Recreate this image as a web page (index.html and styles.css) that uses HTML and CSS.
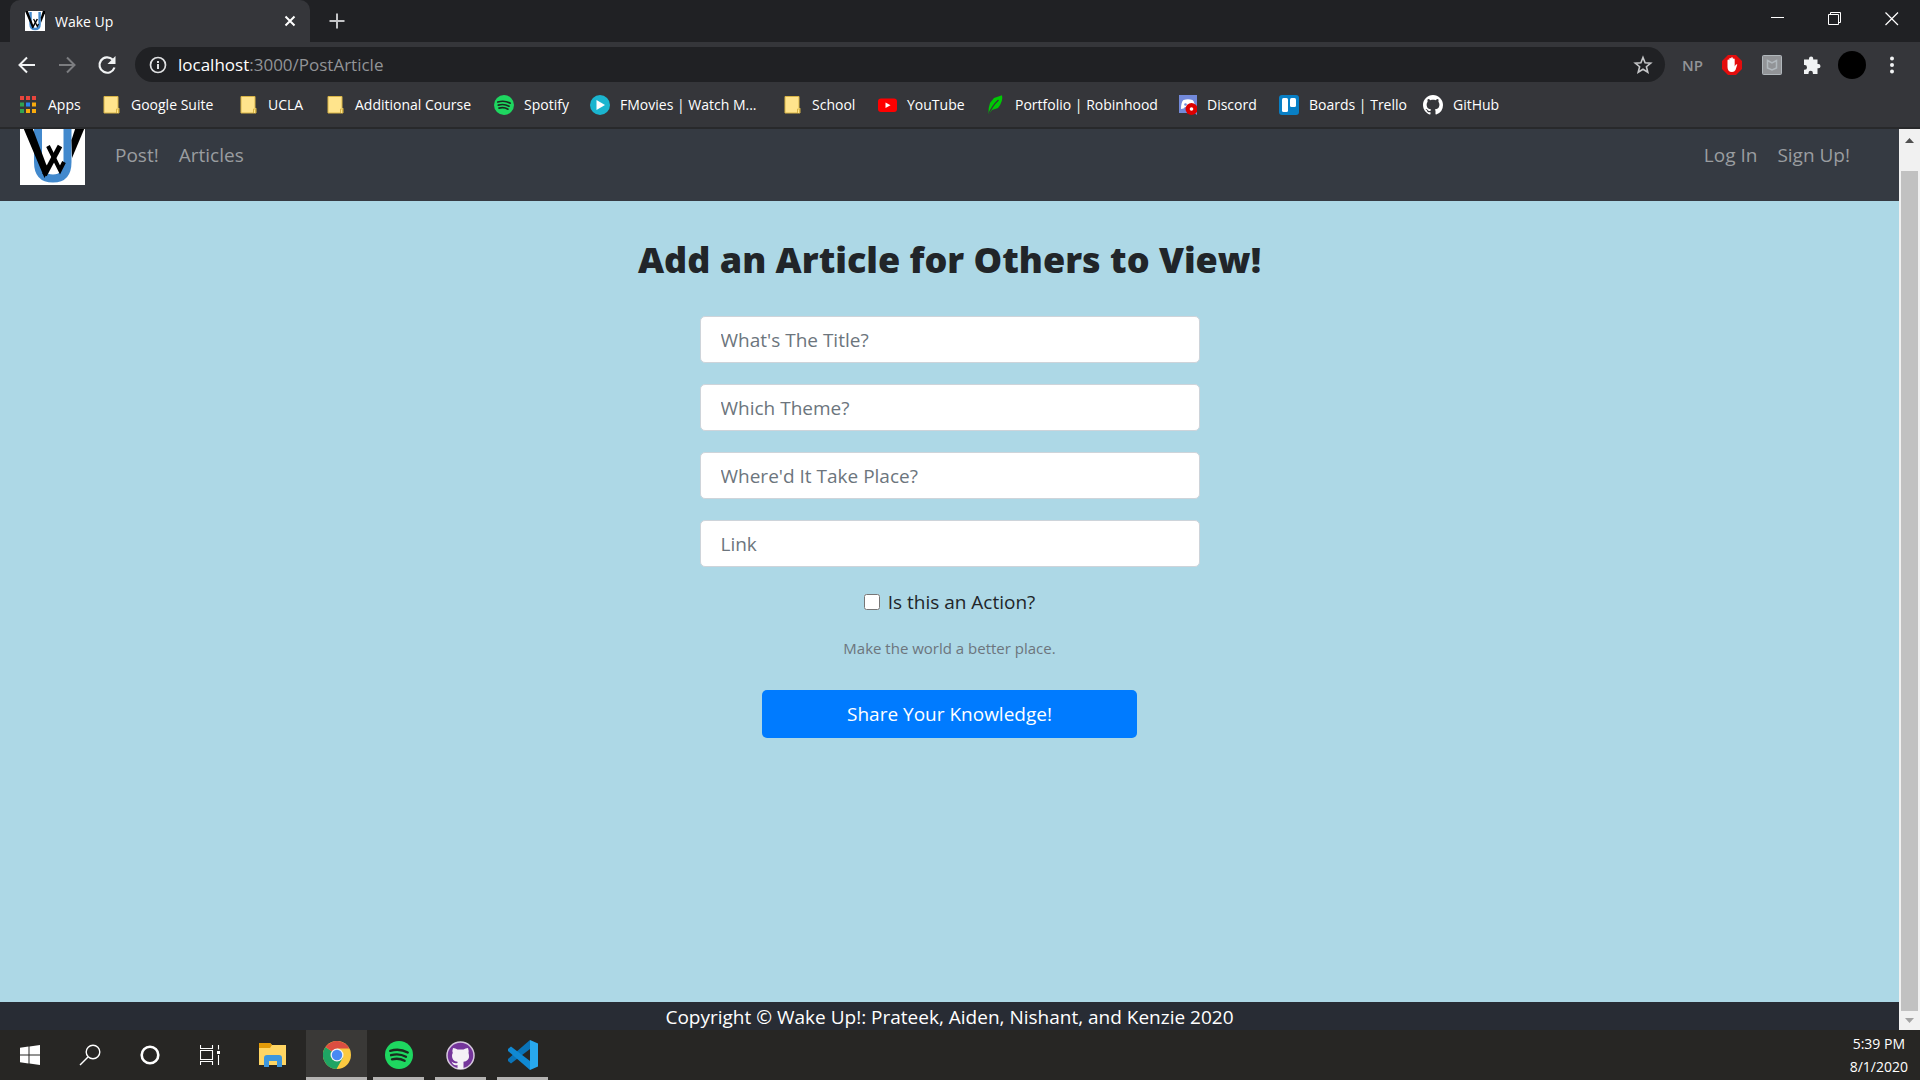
FILE: index.html
```html
<!DOCTYPE html>
<html lang="en">
<head>
<meta charset="utf-8">
<title>Wake Up</title>
<link rel="stylesheet" href="styles.css">
</head>
<body>
<svg class="defs" aria-hidden="true">
  <symbol id="logo" viewBox="0 0 65 65">
    <rect width="65" height="65" fill="#fff"/>
    <path d="M18 3V42Q18 58.500 33 58.500Q47.500 58.500 47.500 42V3" fill="none" stroke="#4289cd" stroke-width="8"/>
    <path d="M0 0H9.500L26 44L29 49L24.500 58Z" fill="#000"/>
    <path d="M58 0H65V7L52 38L51.500 20Z" fill="#000"/>
    <path d="M24.500 55L40 26" fill="none" stroke="#000" stroke-width="5"/>
    <path d="M28 26L40 50L44 42" fill="none" stroke="#000" stroke-width="4"/>
  </symbol>
  <symbol id="folder" viewBox="0 0 20 20">
    <path d="M3 1.500h14v11l1 1v4.500H3z" fill="#ffe48c" stroke="#d8b446"/>
    <path d="M15.500 18v-4h2v4" fill="#ffe48c" stroke="#d8b446"/>
  </symbol>
  <symbol id="spotify" viewBox="0 0 24 24">
    <circle cx="12" cy="12" r="12" fill="#1ed760"/>
    <path d="M4.500 8.400Q12.500 6 19.500 9.800M5.200 12.200Q12 10.200 18 13.500M6 15.700Q12 14.200 16.800 17" fill="none" stroke="#1b2b20" stroke-width="2" stroke-linecap="round"/>
  </symbol>
  <symbol id="octocat" viewBox="0 0 16 16">
    <path d="M8 0C3.580 0 0 3.580 0 8c0 3.540 2.290 6.530 5.470 7.590.4.070.55-.17.55-.38 0-.19-.01-.82-.01-1.490-2.010.37-2.530-.49-2.690-.94-.09-.23-.48-.94-.82-1.130-.28-.15-.68-.52-.01-.53.63-.01 1.080.58 1.230.82.72 1.210 1.870.87 2.330.66.07-.52.28-.87.51-1.070-1.780-.2-3.640-.89-3.640-3.950 0-.87.31-1.590.82-2.150-.08-.2-.36-1.020.08-2.120 0 0 .67-.21 2.200.82.64-.18 1.320-.27 2-.27s1.360.09 2 .27c1.530-1.040 2.200-.82 2.200-.82.44 1.100.16 1.920.08 2.120.51.56.82 1.270.82 2.150 0 3.070-1.870 3.750-3.650 3.950.29.25.54.73.54 1.480 0 1.070-.01 1.930-.01 2.200 0 .21.15.46.55.38A8.010 8.010 0 0 0 16 8c0-4.420-3.580-8-8-8z"/>
  </symbol>
</svg>

<div class="screen">
  <header class="browser">
    <div class="tabstrip">
      <div class="tab">
        <svg class="icon"><use href="#logo"/></svg>
        <span class="tab-title">Wake Up</span>
        <button class="plain" aria-label="Close tab"><svg width="12" height="12" viewBox="0 0 12 12"><path d="M1.500 1.500l9 9M10.500 1.500l-9 9" stroke="#fff" stroke-width="2"/></svg></button>
      </div>
      <button class="plain new-tab" aria-label="New tab"><svg width="16" height="16" viewBox="0 0 16 16"><path d="M8 .5v15M.5 8h15" stroke="#c4c5c7" stroke-width="2"/></svg></button>
      <div class="window-buttons">
        <button class="plain" aria-label="Minimize"><svg width="14" height="14" viewBox="0 0 14 14"><path d="M0 5.500h13" stroke="#fff"/></svg></button>
        <button class="plain" aria-label="Restore"><svg width="14" height="14" viewBox="0 0 14 14"><path d="M.5 2.500h10v10H.5zM2.500 2.500v-2h10v10h-2" fill="none" stroke="#fff"/></svg></button>
        <button class="plain" aria-label="Close"><svg width="14" height="14" viewBox="0 0 14 14"><path d="M.5 .5l12.500 12.500M13 .5L.5 13" stroke="#fff" stroke-width="1.200"/></svg></button>
      </div>
    </div>
    <div class="toolbar">
      <button class="plain nav-button" aria-label="Back"><svg width="20" height="20" viewBox="0 0 20 20"><path d="M18 10H3M10 2.500L2.500 10l7.500 7.500" fill="none" stroke="#f1f3f4" stroke-width="2"/></svg></button>
      <button class="plain nav-button" aria-label="Forward"><svg width="20" height="20" viewBox="0 0 20 20"><path d="M2 10h15M10 2.500l7.500 7.500-7.500 7.500" fill="none" stroke="#7c7d80" stroke-width="2"/></svg></button>
      <button class="plain nav-button" aria-label="Reload"><svg width="20" height="20" viewBox="0 0 20 20"><path d="M17.500 12.500A7.700 7.700 0 1 1 15.600 4.500" fill="none" stroke="#f1f3f4" stroke-width="2.200"/><path d="M18.500 1v8h-8z" fill="#f1f3f4"/></svg></button>
      <div class="address">
        <svg width="18" height="18" viewBox="0 0 18 18"><circle cx="9" cy="9" r="7.500" fill="none" stroke="#dfe0e2" stroke-width="1.700"/><path d="M9 8v5M9 5v2" stroke="#dfe0e2" stroke-width="2"/></svg>
        <div class="url"><span class="host">localhost</span>:3000/PostArticle</div>
        <svg width="20" height="20" viewBox="0 0 20 20"><path d="M10 2.500l2.100 5.200 5.600.4-4.300 3.600 1.400 5.500-4.800-3-4.800 3 1.400-5.500L2.300 8.100l5.600-.4z" fill="none" stroke="#c5c6c8" stroke-width="1.600"/></svg>
      </div>
      <div class="extensions">
        <span class="np">NP</span>
        <svg class="icon" viewBox="0 0 20 20"><path d="M6 0h8l6 6v8l-6 6H6l-6-6V6z" fill="#e40d0d"/><path d="M5.500 12V5.500a.9.900 0 0 1 1.800 0V9V3.800a.9.900 0 0 1 1.800 0V9V3.200a.9.900 0 0 1 1.800 0V9V4.500a.9.900 0 0 1 1.800 0v7l1-1.700q1-1 1.600-.2L13.500 15q-1 2-3.500 2q-4.500 0-4.500-5z" fill="#fff"/></svg>
        <svg class="icon" viewBox="0 0 20 20"><rect x=".5" y=".5" width="19" height="19" rx="1" fill="#929497" stroke="#b0b7bb"/><path d="M5.500 5.500L10 8l4.500-2.500V13L10 15l-4.500-2z" fill="none" stroke="#b1b8bd" stroke-width="1.500"/></svg>
        <svg class="icon" viewBox="0 0 20 20"><path d="M2 4.500h5V3.600a2.100 2.100 0 0 1 4.200 0v.9h4.300v4.600h.9a2.100 2.100 0 0 1 0 4.200h-.9V19h-4.600v-1a2.200 2.200 0 0 0-4.400 0v1H2v-4.300h.7a2.300 2.300 0 0 0 0-4.600H2z" fill="#f1f3f4"/></svg>
        <span class="avatar"></span>
        <svg class="icon" viewBox="0 0 20 20"><g fill="#f1f3f4"><circle cx="10" cy="3.500" r="2"/><circle cx="10" cy="10" r="2"/><circle cx="10" cy="16.500" r="2"/></g></svg>
      </div>
    </div>
    <nav class="bookmarks">
      <a href="#"><svg class="icon" viewBox="0 0 20 20"><path d="M2 1h4v4H2zM8 1h4v4H8zM14 1h4v4h-4z" fill="#e8453c"/><path d="M2 7.500h4v4H2zM2 14h4v4H2z" fill="#32a350"/><path d="M8 7.500h4v4H8z" fill="#2a82f0"/><path d="M14 7.500h4v4h-4zM8 14h4v4H8zM14 14h4v4h-4z" fill="#f9ab0c"/></svg>Apps</a>
      <a href="#"><svg class="icon"><use href="#folder"/></svg>Google Suite</a>
      <a href="#"><svg class="icon"><use href="#folder"/></svg>UCLA</a>
      <a href="#"><svg class="icon"><use href="#folder"/></svg>Additional Course</a>
      <a href="#"><svg class="icon"><use href="#spotify"/></svg>Spotify</a>
      <a href="#"><svg class="icon" viewBox="0 0 20 20"><circle cx="10" cy="10" r="10" fill="#1bb5cf"/><path d="M6.500 5l8.500 5-8.500 5z" fill="#fff"/></svg>FMovies | Watch M...</a>
      <a href="#"><svg class="icon"><use href="#folder"/></svg>School</a>
      <a href="#"><svg class="icon" viewBox="0 0 20 20"><rect x="1" y="3.500" width="19" height="13.500" rx="3" fill="#f00"/><path d="M8.500 7.500l5 2.700-5 2.800z" fill="#fff"/></svg>YouTube</a>
      <a href="#"><svg class="icon" viewBox="0 0 20 20"><path d="M3.500 19.500Q3 13 5 8L9 3L17 .3Q18.500 6 13 13L7 15z" fill="#00c805"/><path d="M3.500 19.500Q7 11 13.500 5" fill="none" stroke="#35363a" stroke-width="1.200"/></svg>Portfolio | Robinhood</a>
      <a href="#"><svg class="icon" viewBox="0 0 20 20"><path d="M2 0h18v20l-3-2H2z" fill="#7289da"/><path d="M4 14Q4 7 6.500 5Q11 3.500 15.500 5Q18 7 18 14Q15 14 14 12H8Q7 14 4 14z" fill="#fff"/><circle cx="8.500" cy="9.500" r="1.300" fill="#7289da"/><circle cx="14.500" cy="14" r="6" fill="#dc0000"/><circle cx="14.500" cy="14" r="1.800" fill="#fff"/></svg>Discord</a>
      <a href="#"><svg class="icon" viewBox="0 0 20 20"><rect width="20" height="20" rx="3" fill="#087fc5"/><rect x="3" y="3" width="6" height="14" rx="1.500" fill="#fff"/><rect x="11" y="3" width="6" height="9" rx="1.500" fill="#fff"/></svg>Boards | Trello</a>
      <a href="#"><svg class="icon white"><use href="#octocat"/></svg>GitHub</a>
    </nav>
  </header>

  <div class="viewport">
    <div class="site">
      <nav class="navbar">
        <a href="#" aria-label="Wake Up home"><svg class="brand" viewBox="0 9 65 56"><use href="#logo" width="65" height="65"/></svg></a>
        <a href="#">Post!</a>
        <a href="#">Articles</a>
        <a class="push" href="#">Log In</a>
        <a href="#">Sign Up!</a>
      </nav>
      <main>
        <h1>Add an Article for Others to View!</h1>
        <form>
          <input class="field" type="text" aria-label="Title" placeholder="What's The Title?">
          <input class="field" type="text" aria-label="Theme" placeholder="Which Theme?">
          <input class="field" type="text" aria-label="Place" placeholder="Where'd It Take Place?">
          <input class="field" type="text" aria-label="Link" placeholder="Link">
          <div class="check"><input type="checkbox" id="action"><label for="action">Is this an Action?</label></div>
          <p class="hint">Make the world a better place.</p>
          <button class="submit" type="button">Share Your Knowledge!</button>
        </form>
      </main>
      <footer>Copyright © Wake Up!: Prateek, Aiden, Nishant, and Kenzie 2020</footer>
    </div>
    <div class="scrollbar">
      <svg width="21" height="42" viewBox="0 0 21 42"><path d="M6 14l4.500-5 4.500 5z" fill="#505050"/></svg>
      <div class="thumb"></div>
      <svg width="21" height="19" viewBox="0 0 21 19"><path d="M6 7l4.500 5L15 7z" fill="#a3a3a3"/></svg>
    </div>
  </div>

  <div class="taskbar">
    <button class="plain" aria-label="Start"><svg width="20" height="20" viewBox="0 0 20 20"><path d="M0 2.800L8.500 1.600V9.500H0zM9.500 1.500L20 0v9.500H9.500zM0 10.500h8.500v8L0 17.300zM9.500 10.500H20V20L9.500 18.600z" fill="#fff"/></svg></button>
    <button class="plain" aria-label="Search"><svg width="22" height="22" viewBox="0 0 22 22"><circle cx="14" cy="8" r="6.800" fill="none" stroke="#fff" stroke-width="1.400"/><path d="M9 13L1 21" stroke="#fff" stroke-width="1.500"/></svg></button>
    <button class="plain" aria-label="Cortana"><svg width="20" height="20" viewBox="0 0 20 20"><circle cx="10" cy="10" r="8.300" fill="none" stroke="#fff" stroke-width="2.600"/></svg></button>
    <button class="plain" aria-label="Task view"><svg width="20" height="20" viewBox="0 0 20 20"><path d="M.5 0v3.500h12V0M.5 5.500h12v9H.5zM.5 20v-3.500h12V20M18.500 0v4.500M18.500 10v10" fill="none" stroke="#fff" stroke-width="1.100"/><path d="M17 6h3v3h-3z" fill="#fff"/></svg></button>
    <button class="plain wide" aria-label="File Explorer"><svg width="28" height="24" viewBox="0 0 28 24"><path d="M0 0h11l2 2h14v20H0z" fill="#ffd563"/><path d="M0 0h11l2 2-2 3H0z" fill="#e19a08"/><path d="M5 24V15q0-3 3-3h12q3 0 3 3v9h-5v-6h-8v6z" fill="#3d96dd"/></svg></button>
    <button class="plain app active" aria-label="Chrome"><svg width="28" height="28" viewBox="0 0 28 28"><circle cx="14" cy="14" r="14" fill="#fbc940"/><path d="M14 14L2.500 6A14 14 0 0 0 13.500 28L20 16.500z" fill="#1fa463"/><path d="M14 14L2.500 6A14 14 0 0 1 26.300 7.500H14z" fill="#dc4e41"/><circle cx="14" cy="14" r="6.500" fill="#f3f3f3"/><circle cx="14" cy="14" r="5.200" fill="#4889f4"/></svg></button>
    <button class="plain app" aria-label="Spotify"><svg width="28" height="28"><use href="#spotify"/></svg></button>
    <button class="plain app" aria-label="GitHub Desktop"><svg width="29" height="29" viewBox="0 0 29 29"><circle cx="14.500" cy="14.500" r="13.500" fill="#75359b" stroke="#d7c9df" stroke-width="1.500"/><path d="M7 7q2.500 0 4.500 1.500h6Q19.500 7 22 7q1 3 .5 5q1.500 5-1 7q-1.500 1.500-4 1.800V28h-6v-4Q7 25 5.500 20.500q2.500 2.500 6 1.500v-1.200Q6 20 6 15q0-2 .8-3Q6 9.500 7 7z" fill="#f4f0f6"/></svg></button>
    <button class="plain app" aria-label="Visual Studio Code"><svg width="30" height="30" viewBox="0 0 30 30"><path d="M22 0v9L3 23.500 0 21V19z" fill="#0a74b9"/><path d="M22 30v-9L3 6.500 0 9v2z" fill="#1089d3"/><path d="M22 0L30 3.500V26.500L22 30z" fill="#28a8ee"/></svg></button>
    <div class="clock"><div>5:39 PM</div><div>8/1/2020</div></div>
  </div>
</div>
</body>
</html>
```
FILE: styles.css
```css
* { box-sizing: border-box; }
body { margin: 0; font-family: "Open Sans", "Noto Sans", sans-serif; }
a { color: inherit; text-decoration: none; }
svg { display: block; flex: none; }
button, input { font: inherit; }
.defs { position: absolute; width: 0; height: 0; }
.plain { display: flex; align-items: center; justify-content: center; padding: 0; border: 0; background: none; }
.icon { width: 20px; height: 20px; }
.white { fill: #fff; }

.screen { display: flex; flex-direction: column; height: 100vh; }

/* Browser chrome */
.browser { background: #35363a; border-bottom: 2px solid #28292b; color: #fff; font-size: 14px; }
.tabstrip { display: flex; height: 42px; padding-left: 10px; background: #202124; }
.tab { display: flex; align-items: center; gap: 10px; width: 300px; padding: 0 14px 0 15px; border-radius: 10px 10px 0 0; background: #35363a; }
.tab-title { flex: 1; }
.new-tab { width: 54px; }
.window-buttons { display: flex; margin-left: auto; padding-bottom: 5px; }
.window-buttons button { width: 57px; }
.toolbar { display: flex; align-items: center; height: 45px; padding: 0 18px 0 7px; }
.nav-button { width: 40px; height: 40px; }
.address { display: flex; flex: 1; align-items: center; gap: 11px; height: 35px; margin-left: 8px; padding: 0 12px 0 14px; border-radius: 18px; background: #202124; color: #929497; font-size: 17px; }
.url { flex: 1; }
.host { color: #fff; }
.extensions { display: flex; align-items: center; gap: 20px; margin-left: 17px; }
.np { width: 20px; color: #929497; font-size: 15px; font-weight: 600; }
.avatar { width: 28px; height: 28px; margin: 0 -4px; border-radius: 50%; background: #000; }
.bookmarks { display: grid; grid-template-columns: 83px 137px 87px 169px 96px 192px 95px 108px 192px 102px 144px auto; height: 40px; padding-left: 18px; }
.bookmarks a { display: flex; align-items: center; gap: 10px; height: 35px; white-space: nowrap; }

/* Page */
.viewport { display: flex; flex: 1; min-height: 0; }
.site { display: flex; flex: 1; flex-direction: column; background: #add8e6; color: #212529; font-size: 19px; }
.navbar { display: flex; align-items: flex-start; gap: 20px; height: 72px; padding: 0 49px 0 20px; background: #353a42; color: #9a9da0; line-height: 52px; }
.brand { width: 65px; height: 56px; margin-right: 10px; }
.push { margin-left: auto; }
main { flex: 1; padding-top: 33px; text-align: center; }
h1 { margin: 0 0 30px; font-size: 36px; font-weight: 800; line-height: 52px; }
form { display: flex; flex-direction: column; align-items: center; }
.field { width: 500px; max-width: 100%; height: 47px; margin-bottom: 21px; padding: 0 20px; border: 1px solid #ced4da; border-radius: 5px; background: #fff; }
.field::placeholder { color: #6c757d; opacity: 1; }
.check { display: flex; align-items: center; gap: 8px; line-height: 28px; }
.check input { width: 16px; height: 16px; margin: 0; }
.hint { margin: 20px 0 30px; color: #6c757d; font-size: 15px; line-height: 24px; }
.submit { width: 375px; height: 48px; padding: 0; border: 0; border-radius: 5px; background: #007bff; color: #fff; }
footer { height: 28px; background: #282c34; color: #fff; line-height: 30px; text-align: center; }
.scrollbar { display: flex; flex-direction: column; width: 21px; background: #f1f1f1; }
.thumb { flex: 1; margin: 0 2px; background: #c1c1c1; }

/* Taskbar */
.taskbar { display: flex; height: 50px; background: #272624; color: #fff; }
.taskbar button { width: 60px; }
.taskbar .wide { width: 66px; }
.taskbar .app { width: 51px; margin-right: 11px; border-top: 3px solid transparent; border-bottom: 3px solid #b4b3b2; }
.taskbar .active { width: 61px; margin-right: 6px; border-top-color: #3a3937; background: #3a3937; }
.clock { margin-left: auto; padding: 2px 12px 0; font-size: 14px; line-height: 23px; text-align: center; }
```
